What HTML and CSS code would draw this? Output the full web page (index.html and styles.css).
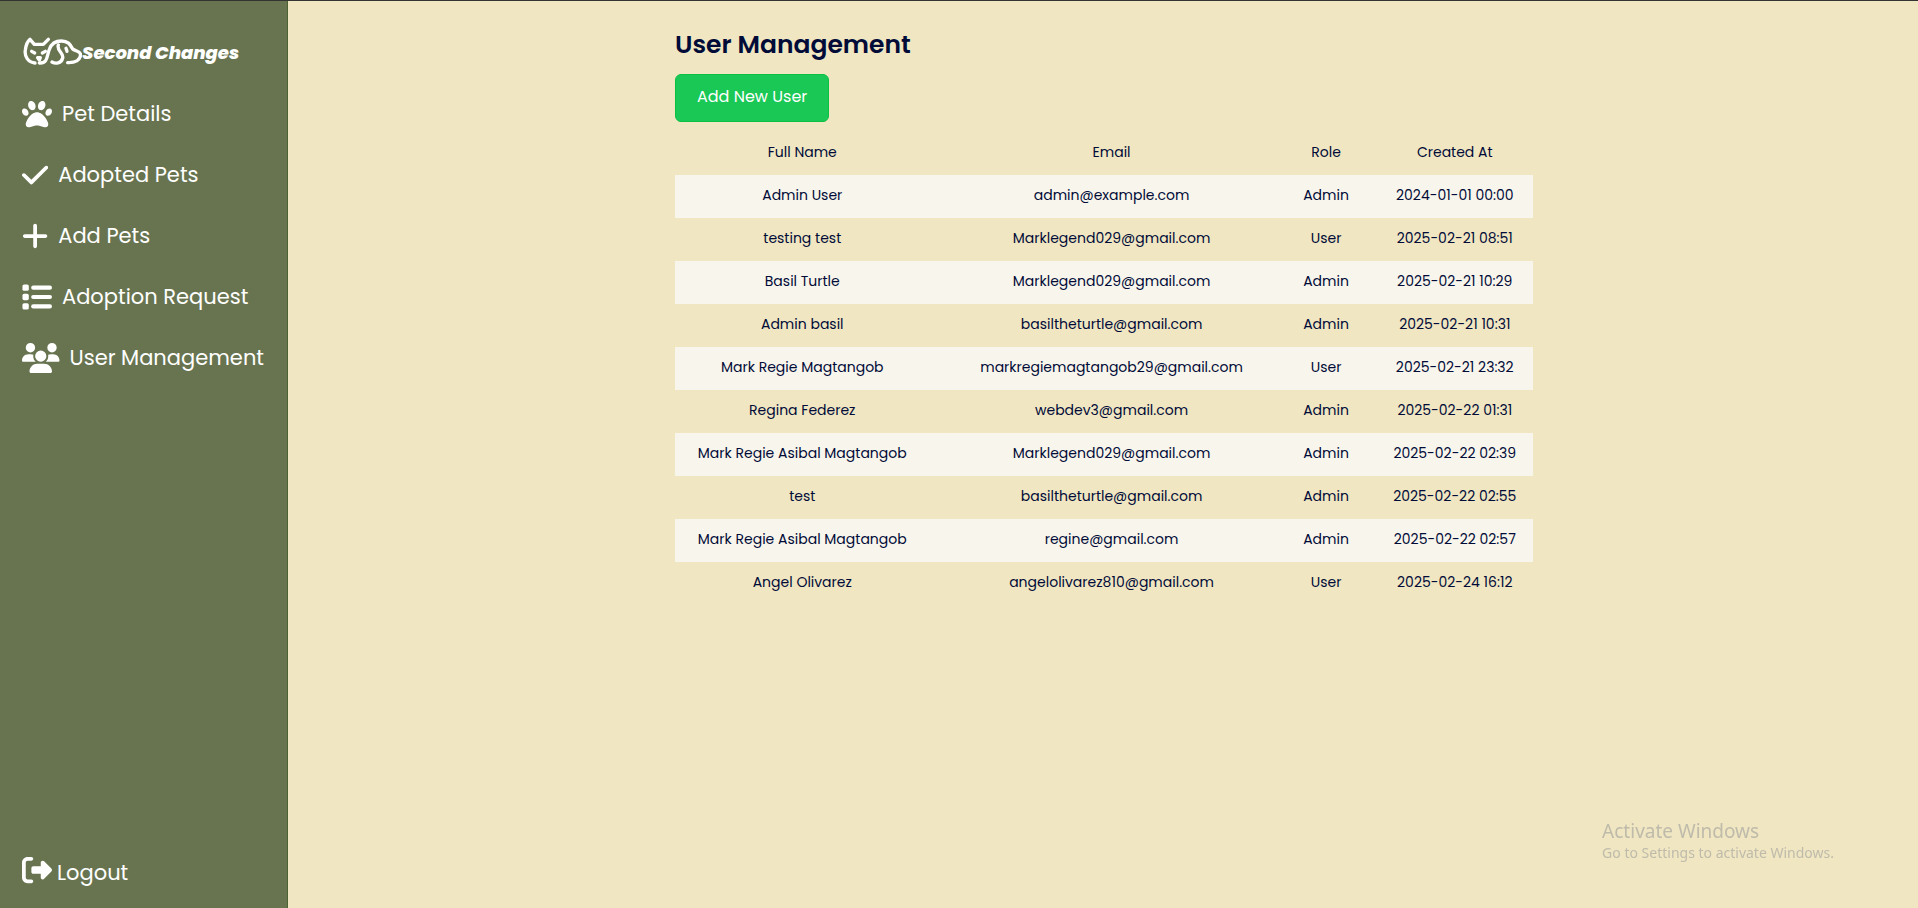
FILE: index.html
```html
<!DOCTYPE html>
<html lang="en">
<head>
<meta charset="utf-8">
<title>User Management</title>
<link rel="stylesheet" href="styles.css">
</head>
<body>
<div class="app">
  <aside class="sidebar">
    <a class="brand" href="#">
      <svg class="brand-logo" viewBox="66 108 180 84" aria-hidden="true">
        <path d="M105 186C84 184 73 166 76 147C78 132 82 121 90 115L103 130H130L145 115"/>
        <path d="M118 186C144 188 140 164 148 145C155 126 168 120 184 120C206 120 211 132 218 144C229 151 242 151 242 162C240 177 226 186 203 185"/>
        <path d="M175 132C169 149 192 156 188 171C184 188 166 189 156 183"/>
        <path d="M95 151L104 156M136 151L127 156M113 170H121L118 177ZM198 142L201 151"/>
      </svg>
      <span class="brand-name">Second Changes</span>
    </a>
    <nav class="nav">
      <a class="nav-link" href="#"><svg class="icon" viewBox="0 0 512 512" aria-hidden="true"><path d="M226.5 92.9c14.3 42.9-.3 86.2-32.6 96.8s-70.1-15.6-84.4-58.5s.3-86.2 32.6-96.8s70.1 15.6 84.4 58.5zM100.4 198.6c18.9 32.4 14.3 70.1-10.2 84.1s-59.7-.9-78.5-33.3S-2.7 179.3 21.8 165.3s59.7 .9 78.5 33.3zM69.2 401.2C121.6 259.9 214.7 224 256 224s134.4 35.9 186.8 177.2c3.6 9.7 5.2 20.1 5.2 30.5v1.6c0 25.8-20.9 46.7-46.7 46.7c-11.5 0-22.9-1.4-34-4.2l-88-22c-15.3-3.8-31.3-3.8-46.6 0l-88 22c-11.1 2.8-22.5 4.2-34 4.2C84.9 480 64 459.1 64 433.3v-1.6c0-10.4 1.6-20.8 5.2-30.5zM421.8 282.7c-24.5-14-29.1-51.7-10.2-84.1s54-47.3 78.5-33.3s29.1 51.7 10.2 84.1s-54 47.3-78.5 33.3zM310.1 189.7c-32.3-10.6-46.9-53.9-32.6-96.8s52.1-69.1 84.4-58.5s46.9 53.9 32.6 96.8s-52.1 69.1-84.4 58.5z"/></svg>Pet Details</a>
      <a class="nav-link" href="#"><svg class="icon" viewBox="0 0 448 512" aria-hidden="true"><path d="M438.6 105.4c12.5 12.5 12.5 32.8 0 45.3l-256 256c-12.5 12.5-32.8 12.5-45.3 0l-128-128c-12.5-12.5-12.5-32.8 0-45.3s32.8-12.5 45.3 0L160 338.7 393.4 105.4c12.5-12.5 32.8-12.5 45.3 0z"/></svg>Adopted Pets</a>
      <a class="nav-link" href="#"><svg class="icon" viewBox="0 0 448 512" aria-hidden="true"><path d="M256 80c0-17.7-14.3-32-32-32s-32 14.3-32 32V224H48c-17.7 0-32 14.3-32 32s14.3 32 32 32H192V432c0 17.7 14.3 32 32 32s32-14.3 32-32V288H400c17.7 0 32-14.3 32-32s-14.3-32-32-32H256V80z"/></svg>Add Pets</a>
      <a class="nav-link" href="#"><svg class="icon" viewBox="0 0 512 512" aria-hidden="true"><rect x="8" y="42" width="108" height="108" rx="28"/><rect x="8" y="202" width="108" height="108" rx="28"/><rect x="8" y="362" width="108" height="108" rx="28"/><rect x="156" y="60" width="356" height="72" rx="36"/><rect x="156" y="220" width="356" height="72" rx="36"/><rect x="156" y="380" width="356" height="72" rx="36"/></svg>Adoption Request</a>
      <a class="nav-link" href="#"><svg class="icon" viewBox="0 0 640 512" aria-hidden="true"><path d="M144 0a80 80 0 1 1 0 160A80 80 0 1 1 144 0zM512 0a80 80 0 1 1 0 160A80 80 0 1 1 512 0zM0 298.7C0 239.8 47.8 192 106.7 192h42.7c15.9 0 31 3.5 44.6 9.7c-1.3 7.2-1.9 14.7-1.9 22.3c0 38.2 16.8 72.5 43.3 96c-.2 0-.4 0-.7 0H21.3C9.6 320 0 310.4 0 298.7zM405.3 320c-.2 0-.4 0-.7 0c26.6-23.5 43.3-57.8 43.3-96c0-7.6-.7-15-1.9-22.3c13.6-6.3 28.7-9.7 44.6-9.7h42.7C592.2 192 640 239.8 640 298.7c0 11.8-9.6 21.3-21.3 21.3H405.3zM224 224a96 96 0 1 1 192 0 96 96 0 1 1 -192 0zM128 485.3C128 411.7 187.7 352 261.3 352H378.7C452.3 352 512 411.7 512 485.3c0 14.7-11.9 26.7-26.7 26.7H154.7c-14.7 0-26.7-11.9-26.7-26.7z"/></svg>User Management</a>
    </nav>
    <a class="nav-link logout" href="#"><svg class="icon" viewBox="0 0 512 512" aria-hidden="true"><path d="M377.9 105.9L500.7 228.7c7.2 7.2 11.3 17.1 11.3 27.3s-4.1 20.1-11.3 27.3L377.9 406.1c-6.4 6.4-15 9.9-24 9.9c-18.7 0-33.9-15.2-33.9-33.9l0-62.1-128 0c-17.7 0-32-14.3-32-32l0-64c0-17.7 14.3-32 32-32l128 0 0-62.1c0-18.7 15.2-33.9 33.9-33.9c9 0 17.6 3.6 24 9.9zM160 96L96 96c-17.7 0-32 14.3-32 32l0 256c0 17.7 14.3 32 32 32l64 0c17.7 0 32 14.3 32 32s-14.3 32-32 32l-64 0c-53 0-96-43-96-96L0 128C0 75 43 32 96 32l64 0c17.7 0 32 14.3 32 32s-14.3 32-32 32z"/></svg><span>Logout</span></a>
  </aside>
  <main class="main">
    <section class="panel">
      <h1 class="title">User Management</h1>
      <button class="add-button" type="button">Add New User</button>
      <table class="users">
        <thead>
          <tr><th class="col-name" scope="col">Full Name</th><th class="col-email" scope="col">Email</th><th class="col-role" scope="col">Role</th><th class="col-date" scope="col">Created At</th></tr>
        </thead>
        <tbody>
          <tr><td class="col-name">Admin User</td><td>admin@example.com</td><td>Admin</td><td>2024-01-01 00:00</td></tr>
          <tr><td class="col-name">testing test</td><td>Marklegend029@gmail.com</td><td>User</td><td>2025-02-21 08:51</td></tr>
          <tr><td class="col-name">Basil Turtle</td><td>Marklegend029@gmail.com</td><td>Admin</td><td>2025-02-21 10:29</td></tr>
          <tr><td class="col-name">Admin basil</td><td>basiltheturtle@gmail.com</td><td>Admin</td><td>2025-02-21 10:31</td></tr>
          <tr><td class="col-name">Mark Regie Magtangob</td><td>markregiemagtangob29@gmail.com</td><td>User</td><td>2025-02-21 23:32</td></tr>
          <tr><td class="col-name">Regina Federez</td><td>webdev3@gmail.com</td><td>Admin</td><td>2025-02-22 01:31</td></tr>
          <tr><td class="col-name">Mark Regie Asibal Magtangob</td><td>Marklegend029@gmail.com</td><td>Admin</td><td>2025-02-22 02:39</td></tr>
          <tr><td class="col-name">test</td><td>basiltheturtle@gmail.com</td><td>Admin</td><td>2025-02-22 02:55</td></tr>
          <tr><td class="col-name">Mark Regie Asibal Magtangob</td><td>regine@gmail.com</td><td>Admin</td><td>2025-02-22 02:57</td></tr>
          <tr><td class="col-name">Angel Olivarez</td><td>angelolivarez810@gmail.com</td><td>User</td><td>2025-02-24 16:12</td></tr>
        </tbody>
      </table>
    </section>
  </main>
</div>
<div class="watermark">
  <p class="watermark-title">Activate Windows</p>
  <p class="watermark-text">Go to Settings to activate Windows.</p>
</div>
</body>
</html>
```

FILE: styles.css
```css
* {
  box-sizing: border-box;
}

body {
  margin: 0;
  font-family: Poppins, Inter, "Open Sans", sans-serif;
  color: #000b38;
  background: #f0e6c2;
}

.app {
  display: flex;
  min-height: 100vh;
  border-top: 1px solid #333;
}

.sidebar {
  display: flex;
  flex: 0 0 288px;
  flex-direction: column;
  padding: 32px 0 17px 22px;
  color: #fff;
  background: #687450;
  border-right: 1px solid #4b6232;
}

.brand {
  display: flex;
  align-items: center;
  height: 36px;
  color: inherit;
  text-decoration: none;
}

.brand-logo {
  width: 60px;
  height: 28px;
  fill: none;
  stroke: #fff;
  stroke-width: 10;
  stroke-linecap: round;
  stroke-linejoin: round;
}

.brand-name {
  padding-top: 3px;
  font-size: 18px;
  font-style: italic;
  font-weight: 800;
  line-height: 36px;
}

.nav {
  display: flex;
  flex-direction: column;
  gap: 25px;
  margin-top: 27px;
}

.nav-link {
  display: flex;
  align-items: center;
  gap: 10px;
  font-size: 21px;
  line-height: 36px;
  color: inherit;
  text-decoration: none;
  white-space: nowrap;
}

.icon {
  height: 30px;
  fill: currentColor;
}

.logout {
  gap: 5px;
  align-items: flex-start;
  margin-top: auto;
}

.main {
  flex: 1;
  padding: 26px 22px 24px 24px;
}

.panel {
  max-width: 858px;
  margin: 0 auto;
}

.title {
  margin: 0 0 11px;
  font-size: 25px;
  font-weight: 600;
  line-height: 36px;
}

.add-button {
  display: block;
  height: 48px;
  padding: 0 21px 3px;
  font: 400 16px Poppins, Inter, sans-serif;
  color: #fff;
  background: #19c855;
  border: 1px solid #0cc044;
  border-radius: 6px;
}

.users {
  width: 100%;
  margin-top: 10px;
  font-size: 14px;
  line-height: 22px;
  text-align: center;
  table-layout: fixed;
  border-collapse: collapse;
}

.users th,
.users td {
  padding: 9px 2px 12px 0;
  font-weight: 400;
}

.users .col-name {
  width: 32%;
  padding-right: 20px;
}

.col-email {
  width: 38%;
}

.col-role {
  width: 12%;
}

.users tbody tr:nth-child(odd) {
  background: #f8f5ec;
}

.watermark {
  position: fixed;
  right: 84px;
  bottom: 45px;
  color: #bfbbab;
  font-family: "Segoe UI", "Noto Sans", sans-serif;
}

.watermark p {
  margin: 0;
}

.watermark-title {
  font-size: 19px;
  line-height: 24px;
}

.watermark-text {
  font-size: 14px;
  line-height: 20px;
}
```
